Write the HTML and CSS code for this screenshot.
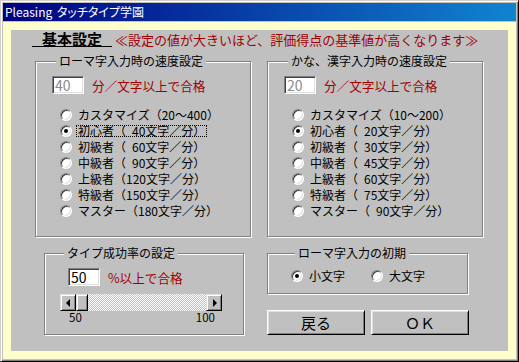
FILE: index.html
```html
<!DOCTYPE html>
<html lang="ja">
<head>
<meta charset="utf-8">
<title>Pleasing タッチタイプ学園</title>
<link rel="stylesheet" href="styles.css">
</head>
<body>
<div class="window">
  <div class="titlebar">Pleasing タッチタイプ学園</div>
  <div class="client">
    <div class="panel">
      <div class="heading">
        <span class="heading-title">基本設定</span>
        <span class="heading-note">≪設定の値が大きいほど、評価得点の基準値が高くなります≫</span>
      </div>

      <div class="row-top">
        <fieldset class="group group-speed">
          <legend>ローマ字入力時の速度設定</legend>
          <div class="pass-row">
            <span class="textbox disabled">40</span>
            <span class="pass-text">分／文字以上で合格</span>
          </div>
          <div class="radio-list">
            <div class="radio-row"><span class="radio"></span><span class="label">カスタマイズ（20～400）</span></div>
            <div class="radio-row"><span class="radio checked"></span><span class="label focus">初心者（&ensp;40文字／分）</span></div>
            <div class="radio-row"><span class="radio"></span><span class="label">初級者（&ensp;60文字／分）</span></div>
            <div class="radio-row"><span class="radio"></span><span class="label">中級者（&ensp;90文字／分）</span></div>
            <div class="radio-row"><span class="radio"></span><span class="label">上級者（120文字／分）</span></div>
            <div class="radio-row"><span class="radio"></span><span class="label">特級者（150文字／分）</span></div>
            <div class="radio-row"><span class="radio"></span><span class="label">マスター（180文字／分）</span></div>
          </div>
        </fieldset>

        <fieldset class="group group-speed">
          <legend>かな、漢字入力時の速度設定</legend>
          <div class="pass-row">
            <span class="textbox disabled">20</span>
            <span class="pass-text">分／文字以上で合格</span>
          </div>
          <div class="radio-list">
            <div class="radio-row"><span class="radio"></span><span class="label">カスタマイズ（10～200）</span></div>
            <div class="radio-row"><span class="radio checked"></span><span class="label">初心者（&ensp;20文字／分）</span></div>
            <div class="radio-row"><span class="radio"></span><span class="label">初級者（&ensp;30文字／分）</span></div>
            <div class="radio-row"><span class="radio"></span><span class="label">中級者（&ensp;45文字／分）</span></div>
            <div class="radio-row"><span class="radio"></span><span class="label">上級者（&ensp;60文字／分）</span></div>
            <div class="radio-row"><span class="radio"></span><span class="label">特級者（&ensp;75文字／分）</span></div>
            <div class="radio-row"><span class="radio"></span><span class="label">マスター（&ensp;90文字／分）</span></div>
          </div>
        </fieldset>
      </div>

      <div class="row-bottom">
        <fieldset class="group group-rate">
          <legend>タイプ成功率の設定</legend>
          <div class="pass-row rate-pass">
            <span class="textbox">50</span>
            <span class="pass-text">%以上で合格</span>
          </div>
          <div class="scrollbar">
            <span class="sb-btn"><span class="arrow-left"></span></span>
            <span class="sb-thumb"></span>
            <span class="sb-track"></span>
            <span class="sb-btn"><span class="arrow-right"></span></span>
          </div>
          <div class="scale">
            <span>50</span>
            <span>100</span>
          </div>
        </fieldset>

        <div class="right-col">
          <fieldset class="group group-case">
            <legend>ローマ字入力の初期</legend>
            <div class="case-row">
              <div class="radio-row"><span class="radio checked"></span><span class="label">小文字</span></div>
              <div class="radio-row"><span class="radio"></span><span class="label">大文字</span></div>
            </div>
          </fieldset>
          <div class="buttons">
            <button class="btn" type="button">戻る</button>
            <button class="btn" type="button">ＯＫ</button>
          </div>
        </div>
      </div>
    </div>
  </div>
</div>
</body>
</html>
```

FILE: styles.css
```css
* { box-sizing: border-box; }

html, body {
  margin: 0;
  padding: 0;
}

body {
  width: 519px;
  height: 362px;
  overflow: hidden;
  background: #c0c0c0;
  color: #000;
  font-family: "Noto Sans CJK JP", "Noto Sans", sans-serif;
  font-size: 12px;
}

.window {
  width: 519px;
  height: 362px;
  display: flex;
  flex-direction: column;
  padding: 2px;
  background: #c0c0c0;
  border: 1px solid;
  border-color: #d4d0c8 #000 #000 #d4d0c8;
  box-shadow: inset 1px 1px #fff, inset -1px -1px #808080;
}

.titlebar {
  height: 18px;
  flex: none;
  padding-left: 2px;
  line-height: 18px;
  color: #fff;
  font-size: 12px;
  font-feature-settings: "palt";
  word-spacing: 2px;
  white-space: nowrap;
  background: linear-gradient(to right, #000080, #1084d0);
}

.client {
  flex: 1;
  margin-top: 1px;
  padding: 8px;
  background: #ffffcc;
}

.panel {
  height: 100%;
  background: #c0c0c0;
}

/* heading */
.heading {
  height: 24px;
  padding: 1px 0 0 21px;
  display: flex;
  align-items: baseline;
  white-space: nowrap;
}

.heading-title {
  padding: 0 10px;
  font-size: 15px;
  font-weight: bold;
  line-height: 15px;
  border-bottom: 1px solid #000;
}

.heading-note {
  margin-left: 3px;
  color: #a00000;
  font-size: 13px;
  line-height: 15px;
}

/* group boxes */
.group {
  margin: 0;
  padding: 0;
  min-width: 0;
  border: 1px solid #808080;
  box-shadow: inset 1px 1px #fff, 1px 1px #fff;
}

.group legend {
  margin-left: 4px;
  padding: 0 3px;
  font-size: 12px;
  line-height: 14px;
  background: #c0c0c0;
  white-space: nowrap;
}

.row-top {
  display: flex;
  gap: 16px;
  padding-left: 24px;
}

.group-speed {
  width: 216px;
  padding: 8px 0 17px 16px;
}

.pass-row {
  height: 18px;
  display: flex;
  align-items: center;
}

.textbox {
  width: 32px;
  height: 18px;
  padding-left: 2px;
  background: #fff;
  border: 1px solid;
  border-color: #808080 #fff #fff #808080;
  box-shadow: inset 1px 1px #404040, inset -1px -1px #dfdfdf;
  font-size: 14px;
  line-height: 16px;
  color: #000;
}

.textbox.disabled {
  color: #8a8a8a;
}

.pass-text {
  margin-left: 8px;
  color: #a00000;
  font-size: 12.6px;
  white-space: nowrap;
}

.radio-list {
  margin-top: 13px;
  padding-left: 8px;
}

.radio-row {
  height: 16px;
  display: flex;
  align-items: center;
  white-space: nowrap;
}

.radio {
  flex: none;
  width: 12px;
  height: 12px;
  margin-right: 6px;
  border-radius: 50%;
  background: #fff;
  border: 1px solid;
  border-color: #808080 #fff #fff #808080;
  box-shadow: inset 1px 1px #404040, inset -1px -1px #dfdfdf;
  display: flex;
  align-items: center;
  justify-content: center;
}

.radio.checked::after {
  content: "";
  width: 4px;
  height: 4px;
  border-radius: 50%;
  background: #000;
}

.label {
  font-size: 12px;
  line-height: 16px;
}

.label.focus {
  height: 12px;
  line-height: 10px;
  margin-left: -2px;
  padding: 0 1px;
  border: 1px dotted #000;
}

/* bottom row */
.row-bottom {
  display: flex;
  gap: 23px;
  margin-top: 9px;
  padding-left: 33px;
}

.group-rate {
  width: 200px;
  padding: 8px 0 9px 15px;
}

.rate-pass {
  margin-left: 8px;
}

.scrollbar {
  width: 162px;
  height: 17px;
  margin-top: 8px;
  display: flex;
}

.sb-btn,
.sb-thumb {
  flex: none;
  height: 17px;
  background: #c0c0c0;
  border: 1px solid;
  border-color: #dfdfdf #000 #000 #dfdfdf;
  box-shadow: inset 1px 1px #fff, inset -1px -1px #808080;
}

.sb-btn {
  width: 16px;
  display: flex;
  align-items: center;
  justify-content: center;
}

.sb-thumb {
  width: 12px;
}

.sb-track {
  flex: 1;
  background: repeating-conic-gradient(#c0c0c0 0 25%, #fff 0 50%) 0 0 / 2px 2px;
}

.arrow-left {
  width: 0;
  height: 0;
  margin-left: -1px;
  border-top: 4px solid transparent;
  border-bottom: 4px solid transparent;
  border-right: 4px solid #000;
}

.arrow-right {
  width: 0;
  height: 0;
  margin-left: 1px;
  border-top: 4px solid transparent;
  border-bottom: 4px solid transparent;
  border-left: 4px solid #000;
}

.scale {
  width: 162px;
  display: flex;
  justify-content: space-between;
  padding: 0 7px 0 9px;
  font-size: 11.5px;
  line-height: 12px;
}

.right-col {
  width: 202px;
}

.group-case {
  width: 201px;
  padding: 8px 0 9px 23px;
}

.case-row {
  display: flex;
  gap: 26px;
}

.buttons {
  margin-top: 16px;
  display: flex;
  gap: 6px;
}

.btn {
  width: 98px;
  height: 25px;
  margin: 0;
  padding: 0;
  background: #c0c0c0;
  border: 1px solid;
  border-color: #fff #000 #000 #fff;
  box-shadow: inset 1px 1px #dfdfdf, inset -1px -1px #808080;
  font-family: "Noto Sans CJK JP", "Noto Sans", sans-serif;
  font-size: 15px;
  line-height: 23px;
  color: #000;
}
```
